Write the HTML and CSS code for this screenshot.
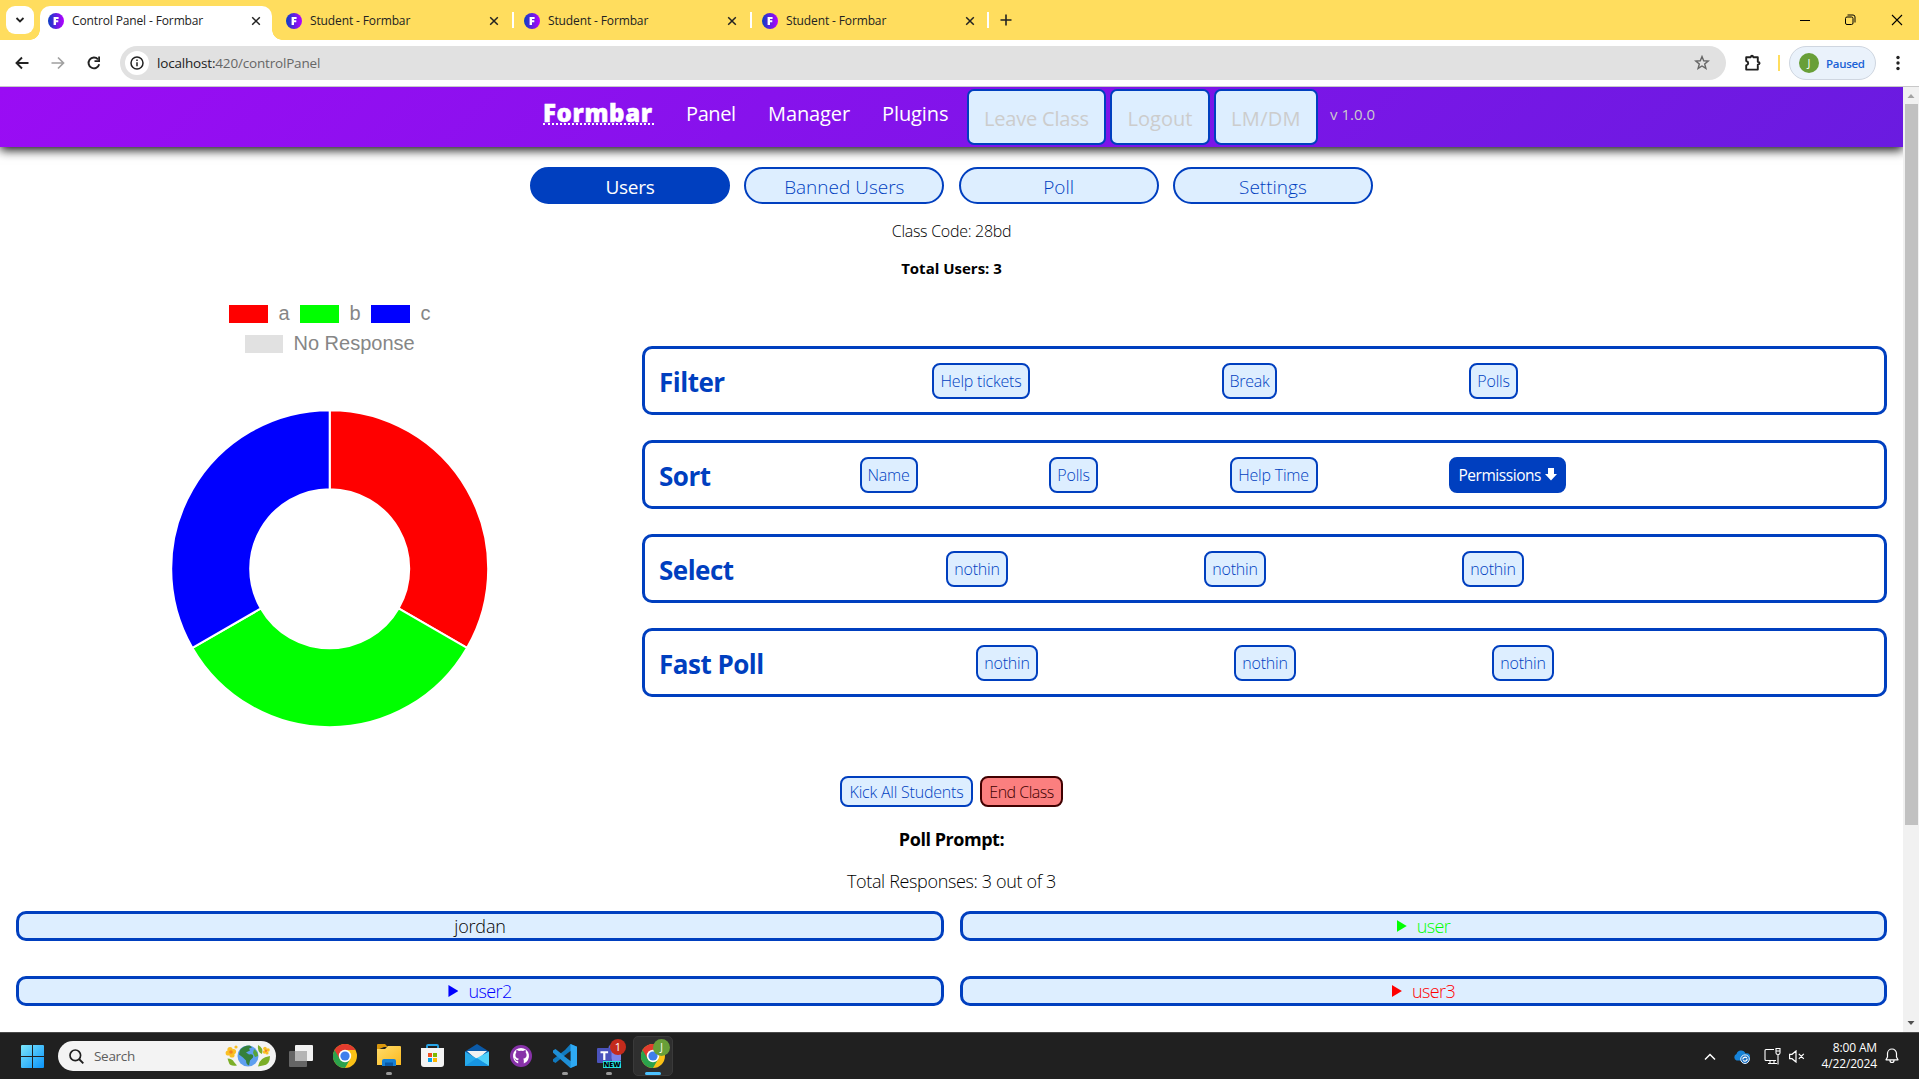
FILE: index.html
```html
<!DOCTYPE html>
<html lang="en">
<head>
<meta charset="utf-8">
<title>Control Panel - Formbar</title>
<link rel="stylesheet" href="styles.css">
</head>
<body>
<svg width="0" height="0" class="defs">
  <defs>
    <linearGradient id="fav" x1="0" x2="1"><stop offset="0" stop-color="#0b3fc4"/><stop offset="1" stop-color="#b400ff"/></linearGradient>
    <linearGradient id="win" x1="0" y1="0" x2="1" y2="1"><stop offset="0" stop-color="#7be6fb"/><stop offset="1" stop-color="#0a93fa"/></linearGradient>
    <linearGradient id="fold" x1="0" y1="0" x2="1" y2="1"><stop offset="0" stop-color="#ffdc6b"/><stop offset="1" stop-color="#fbb91f"/></linearGradient>
    <symbol id="favicon" viewBox="0 0 16 16"><circle cx="8" cy="8" r="8" fill="url(#fav)"/><path d="M5.600 4h5v2.100H8v1.200h2.300v2H8V12H5.600z" fill="#fff"/></symbol>
    <symbol id="close" viewBox="0 0 10 10"><path d="M1.200 1.200l7.600 7.600M8.800 1.200L1.200 8.800" stroke="#222" stroke-width="1.500" fill="none"/></symbol>
    <symbol id="chrome" viewBox="0 0 24 24">
      <circle cx="12" cy="12" r="12" fill="#fbc116"/>
      <path d="M12 12L1.600 6A12 12 0 0 0 12 24l5.200-9z" fill="#2ba24c"/>
      <path d="M1.600 6A12 12 0 0 1 22.400 6H12L6.800 15z" fill="#e33b2e"/>
      <circle cx="12" cy="12" r="6.200" fill="#fff"/><circle cx="12" cy="12" r="4.600" fill="#3f7fec"/>
    </symbol>
  </defs>
</svg>

<div class="tabstrip">
  <div class="tab-search"><svg width="10" height="8" viewBox="0 0 10 8"><path d="M1.500 2L5 5.500 8.500 2" fill="none" stroke="#222" stroke-width="1.800"/></svg></div>
  <div class="tab tab-active"><svg class="favicon"><use href="#favicon"/></svg><span class="tab-title">Control Panel - Formbar</span><svg class="close"><use href="#close"/></svg></div>
  <div class="tab"><svg class="favicon"><use href="#favicon"/></svg><span class="tab-title">Student - Formbar</span><svg class="close"><use href="#close"/></svg></div>
  <div class="tab tab-sep"><svg class="favicon"><use href="#favicon"/></svg><span class="tab-title">Student - Formbar</span><svg class="close"><use href="#close"/></svg></div>
  <div class="tab tab-sep"><svg class="favicon"><use href="#favicon"/></svg><span class="tab-title">Student - Formbar</span><svg class="close"><use href="#close"/></svg></div>
  <div class="new-tab"><svg width="12" height="12" viewBox="0 0 12 12"><path d="M6 .5v11M.5 6h11" stroke="#222" stroke-width="1.600"/></svg></div>
  <div class="window-controls">
    <svg width="10" height="12" viewBox="0 0 10 12"><path d="M0 6.500h10" stroke="#000"/></svg>
    <svg width="11" height="12" viewBox="0 0 11 12"><rect x=".5" y="3" width="7.500" height="7.500" rx="1.500" fill="none" stroke="#000"/><path d="M2.500 1h5.500a2 2 0 0 1 2 2v5.500" fill="none" stroke="#000"/></svg>
    <svg width="12" height="12" viewBox="0 0 12 12"><path d="M1 1l10 10M11 1L1 11" stroke="#000" stroke-width="1.100"/></svg>
  </div>
</div>

<div class="toolbar">
  <svg class="nav-icon" viewBox="0 0 16 16"><path d="M14.500 8H3M8 2.500L2.500 8 8 13.500" fill="none" stroke="#222" stroke-width="1.900"/></svg>
  <svg class="nav-icon" viewBox="0 0 16 16"><path d="M1.500 8H13M8 2.500L13.500 8 8 13.500" fill="none" stroke="#a0a0a0" stroke-width="1.700"/></svg>
  <svg class="nav-icon" viewBox="0 0 16 16"><path d="M13.200 9.300A5.400 5.400 0 1 1 12 4.300" fill="none" stroke="#222" stroke-width="1.900"/><path d="M14 1.500V7H8.500V5.300h3.700V1.500z" fill="#222"/></svg>
  <div class="omnibox">
    <div class="site-info"><svg width="14" height="14" viewBox="0 0 14 14"><circle cx="7" cy="7" r="6" fill="none" stroke="#222" stroke-width="1.500"/><path d="M7 6.200v4M7 3.500v1.500" stroke="#222" stroke-width="1.500"/></svg></div>
    <span class="url"><b>localhost:</b>420/controlPanel</span>
    <svg class="star" width="16" height="16" viewBox="0 0 16 16"><path d="M8 1.600l1.700 4.200 4.500.3-3.500 2.900 1.200 4.400L8 11l-3.900 2.400 1.200-4.400L1.800 6.100l4.500-.3z" fill="none" stroke="#666" stroke-width="1.400"/></svg>
  </div>
  <svg class="ext" width="18" height="18" viewBox="0 0 18 18"><path d="M2.200 3.200h4.600q.2-1.500 1.200-1.500t1.200 1.500h4.600v4.600q1.800.2 1.800 1.400t-1.800 1.400v5H2.200v-4.200q2-.5 2-2.200t-2-2.200z" fill="none" stroke="#1f1f1f" stroke-width="1.900" stroke-linejoin="round"/></svg>
  <div class="tool-sep"></div>
  <div class="profile"><span class="avatar">J</span><span class="paused">Paused</span></div>
  <svg class="kebab" width="4" height="16" viewBox="0 0 4 16"><circle cx="2" cy="2.500" r="1.700"/><circle cx="2" cy="8" r="1.700"/><circle cx="2" cy="13.500" r="1.700"/></svg>
</div>

<div class="viewport">
  <div class="page">
    <header class="site-header">
      <a class="brand">Formbar</a>
      <a class="link link-panel">Panel</a>
      <a class="link link-manager">Manager</a>
      <a class="link link-plugins">Plugins</a>
      <button class="head-btn btn-leave">Leave Class</button>
      <button class="head-btn btn-logout">Logout</button>
      <button class="head-btn btn-mode">LM/DM</button>
      <span class="version">v 1.0.0</span>
    </header>

    <nav class="pills">
      <a class="pill pill-on">Users</a>
      <a class="pill">Banned Users</a>
      <a class="pill">Poll</a>
      <a class="pill">Settings</a>
    </nav>
    <div class="class-code">Class Code: 28bd</div>
    <div class="total-users">Total Users: 3</div>

    <section class="dashboard">
      <svg class="chart" width="630" height="450" viewBox="0 0 630 450">
        <g class="legend">
          <rect x="229" y="15" width="39" height="18" fill="#f00"/><text x="278.500" y="30">a</text>
          <rect x="300" y="15" width="39" height="18" fill="#0f0"/><text x="349.500" y="30">b</text>
          <rect x="371" y="15" width="39" height="18" fill="#00f"/><text x="420.500" y="30">c</text>
          <rect x="245" y="45" width="38" height="18" fill="#e1e1e1"/><text x="293.500" y="60">No Response</text>
        </g>
        <g transform="translate(329.700 278.700)" stroke="#fff" stroke-width="2">
          <path d="M0-158.500A158.500 158.500 0 0 1 137.270 79.250L68.850 39.750A79.500 79.500 0 0 0 0-79.500z" fill="#f00"/>
          <path d="M137.270 79.250A158.500 158.500 0 0 1-137.270 79.250L-68.850 39.750A79.500 79.500 0 0 0 68.850 39.750z" fill="#0f0"/>
          <path d="M-137.270 79.250A158.500 158.500 0 0 1 0-158.500V-79.500A79.500 79.500 0 0 0-68.850 39.750z" fill="#00f"/>
        </g>
      </svg>
      <div class="panels">
        <div class="panel panel-filter"><h2>Filter</h2><button class="w98">Help tickets</button><button class="w55">Break</button><button class="w49">Polls</button></div>
        <div class="panel panel-sort"><h2>Sort</h2><button class="w58">Name</button><button class="w49">Polls</button><button class="w88">Help Time</button><button class="w117 on">Permissions <svg width="12" height="13" viewBox="0 0 12 13"><path d="M3 0h6v6h3l-6 6.500L0 6h3z" fill="#fff"/></svg></button></div>
        <div class="panel panel-select"><h2>Select</h2><button class="w62">nothin</button><button class="w62">nothin</button><button class="w62">nothin</button></div>
        <div class="panel panel-fast"><h2>Fast Poll</h2><button class="w62">nothin</button><button class="w62">nothin</button><button class="w62">nothin</button></div>
      </div>
    </section>

    <div class="actions"><button class="kick">Kick All Students</button><button class="end">End Class</button></div>
    <div class="poll-prompt">Poll Prompt:</div>
    <div class="responses">Total Responses: 3 out of 3</div>

    <div class="users">
      <div class="user"><span>jordan</span></div>
      <div class="user green"><i></i><span>user</span></div>
      <div class="user blue"><i></i><span>user2</span></div>
      <div class="user red"><i></i><span>user3</span></div>
    </div>
  </div>
  <div class="scrollbar">
    <svg width="16" height="17" viewBox="0 0 16 17"><path d="M4.500 11h7L8 7z" fill="#a3a3a3"/></svg>
    <div class="thumb"></div>
    <svg class="down" width="16" height="17" viewBox="0 0 16 17"><path d="M4.500 6h7L8 10z" fill="#505050"/></svg>
  </div>
</div>

<div class="taskbar">
  <svg class="start" width="23" height="23" viewBox="0 0 23 23"><path d="M0 1a1 1 0 0 1 1-1h10v11H0zM12 0h10a1 1 0 0 1 1 1v10H12zM0 12h11v11H1a1 1 0 0 1-1-1zM12 12h11v10a1 1 0 0 1-1 1H12z" fill="url(#win)"/></svg>
  <div class="search">
    <svg width="15" height="15" viewBox="0 0 15 15"><circle cx="6.300" cy="6.300" r="5.300" fill="none" stroke="#1f1f1f" stroke-width="1.700"/><path d="M10 10l4.300 4.300" stroke="#1f1f1f" stroke-width="1.900"/></svg>
    <span>Search</span>
    <svg class="earth" width="46" height="24" viewBox="0 0 46 24">
      <g fill="#f9bf24"><circle cx="5" cy="5.500" r="2.600"/><circle cx="8.500" cy="7.500" r="2.600"/><circle cx="3.200" cy="9" r="2.600"/><circle cx="7" cy="11" r="2.600"/><circle cx="11" cy="3" r="1.600"/><circle cx="40" cy="4.500" r="1.800"/><circle cx="43" cy="6" r="1.800"/><circle cx="39.500" cy="8" r="1.800"/><circle cx="42" cy="9" r="1.600"/></g>
      <circle cx="6" cy="8" r="1.800" fill="#f4811f"/><circle cx="41" cy="6.800" r="1.200" fill="#f4811f"/>
      <g fill="#7bae27"><path d="M2.500 14.500q5 0 6.500 3.500l3 3.500q-7 1-8-2.500z"/><path d="M33 1q6 3 4 9-5-2-4-9zM45 12q0 9-7 9.500l-5 1q1-9 12-10.500z"/></g>
      <circle cx="23" cy="12" r="10.500" fill="#5e9ff0"/>
      <path d="M15 6q4-5 10-4.500l2 2-3 1 1 2-4 2 3 2q5-1 4 3l-3 3-1 5q-3-1-3-5l-3-3-4-3z" fill="#35803a"/><path d="M29 5q4 3 4 7l-3 1-2-4z" fill="#57a43a"/>
    </svg>
  </div>
  <svg class="task-view" width="24" height="23" viewBox="0 0 24 23"><rect x="6" width="18" height="16" rx="1" fill="#f1f1f1"/><rect y="6" width="18" height="16" rx="1" fill="#777" fill-opacity=".8"/><rect x="6" y="6" width="12" height="10" fill="#b4b4b4"/></svg>
  <svg class="app app-chrome" width="24" height="24"><use href="#chrome"/></svg>
  <div class="app app-explorer running"><svg width="24" height="22" viewBox="0 0 24 22"><path d="M0 1q0-1 1-1h7l3 3h-4L0 6z" fill="#d9960c"/><path d="M0 5h8l3-3h12q1 0 1 1v18H0z" fill="url(#fold)"/><path d="M5 22v-5q0-2 2-2h10q2 0 2 2v5z" fill="#1680d4"/><path d="M8 18.500h8V22H8z" fill="#0a58a5"/></svg></div>
  <svg class="app app-store" width="23" height="23" viewBox="0 0 23 23"><path d="M6 5V1.800Q6 1 7 1h9q1 0 1 .8V5" fill="none" stroke="#27a5e8" stroke-width="1.800"/><path d="M0 4h23v16q0 3-3 3H3q-3 0-3-3z" fill="#f4f4f4"/><path d="M7 9h4v4H7z" fill="#f14f21"/><path d="M12 9h4v4h-4z" fill="#7eb900"/><path d="M7 14h4v4H7z" fill="#00a3ee"/><path d="M12 14h4v4h-4z" fill="#feb800"/></svg>
  <svg class="app app-mail" width="24" height="22" viewBox="0 0 24 22"><path d="M0 7.500L12 0l12 7.500-4 5H4z" fill="#0b5aa8"/><path d="M2 7h20l-10 9z" fill="#f1f1f1"/><path d="M0 7.500L24 22H0z" fill="#27a9ea"/><path d="M24 7.500V22L11 14.500z" fill="#4fd0fa"/><path d="M0 22l12-8 12 8z" fill="#1795e2"/></svg>
  <svg class="app app-github" width="22" height="22" viewBox="0 0 22 22"><circle cx="11" cy="11" r="11" fill="#8732a8"/><path d="M11 3a8 8 0 0 0-2.800 15.500v-2.300q-2.400.4-3-1.600l-1-1.200q1-.2 1.800 1.200.8 1 2.200.4l.6-1.200Q5.400 13.200 5.400 10q0-1.500.9-2.500-.4-1 .1-2.400 1 0 2.500 1a8 8 0 0 1 4.200 0q1.500-1 2.500-1 .5 1.400.1 2.400.9 1 .9 2.500 0 3.200-3.400 3.800.6.600.6 1.800v2.900A8 8 0 0 0 11 3z" fill="#fff"/></svg>
  <div class="app app-code running"><svg width="24" height="24" viewBox="0 0 24 24"><path d="M17.500 0L24 2.800v18.400L17.500 24 8 14.500 2.500 19 0 17.500v-2.200L12 6z" fill="#1179bd"/><path d="M17.500 24L0 8.700V6.500L2.500 5 17.500 17z" fill="#1f8fd6"/><path d="M17.500 0L24 2.800v18.400L17.500 24z" fill="#2ea9f3"/><path d="M17.500 7v10L11 12z" fill="#202020"/></svg></div>
  <div class="app app-teams running"><svg width="24" height="24" viewBox="0 0 24 24"><path d="M12 4h12v12q-3 5-9 3z" fill="#7b83eb"/><circle cx="15" cy="4" r="3.500" fill="#5b63cb"/><rect y="4" width="14.500" height="15" rx="1" fill="#4b53bc"/><path d="M3.500 7.300h7.600v2H8.400V16H6.200V9.300H3.500z" fill="#fff"/></svg><span class="count">1</span><span class="new">NEW</span></div>
  <div class="app app-active running"><svg width="24" height="24"><use href="#chrome"/></svg><span class="who">J</span></div>
  <div class="tray">
    <svg class="t-chev" width="12" height="8" viewBox="0 0 12 8"><path d="M1 6.500L6 1.500l5 5" fill="none" stroke="#fff" stroke-width="1.500"/></svg>
    <svg class="t-cloud" width="17" height="14" viewBox="0 0 17 14"><path d="M3.500 10.500a3.500 3.500 0 0 1 0-6.500 4.800 4.800 0 0 1 9-.5A3.500 3.500 0 0 1 15 10.500z" fill="#1683d9"/><circle cx="12" cy="9.200" r="4.300" fill="#1a6fc0" stroke="#e9f4ff" stroke-width="1"/><path d="M9.800 9.600a2.300 2.300 0 0 1 4-1.600M14.200 8.800a2.300 2.300 0 0 1-4 1.600" fill="none" stroke="#fff" stroke-width="1.200"/></svg>
    <svg class="t-net" width="17" height="17" viewBox="0 0 17 17"><path d="M10 1.500H2q-1 0-1 1v9q0 1 1 1h10M4 15.500h9M6 12.500v3M10 12.500v3M14 6.500v10M12 .5v4.500q0 1.500 2 1.500t2-1.500V.5zM12 3h4" fill="none" stroke="#fff" stroke-width="1.100"/></svg>
    <svg class="t-mute" width="16" height="13" viewBox="0 0 16 13"><path d="M.6 4.300h2.400L7 1v11L3 8.700H.6zM9.800 3.800l5 5M14.800 3.800l-5 5" fill="none" stroke="#fff" stroke-width="1.200"/></svg>
    <div class="clock"><span>8:00 AM</span><span>4/22/2024</span></div>
    <svg class="t-bell" width="14" height="16" viewBox="0 0 14 16"><path d="M1 11.800h12L11.500 9V5.500a4.500 4.500 0 0 0-9 0V9zM5 12.500q0 2 2 2t2-2" fill="none" stroke="#fff" stroke-width="1.200" stroke-linejoin="round"/></svg>
  </div>
</div>
</body>
</html>
```
FILE: styles.css
```css
* { box-sizing: border-box; }
body {
  margin: 0;
  width: 1919px;
  height: 1079px;
  overflow: hidden;
  display: flex;
  flex-direction: column;
  background: #fff;
  font-family: "Open Sans", "Noto Sans", sans-serif;
  color: #000;
}
svg { display: block; flex: none; }
.defs { position: absolute; }
button { font-family: inherit; padding: 0; margin: 0; white-space: nowrap; }

/* browser tabs */
.tabstrip { height: 40px; background: #ffdd5e; display: flex; padding-left: 6px; flex: none; }
.tab-search { width: 28px; height: 28px; margin-top: 6px; border-radius: 9px; background: #fff; display: flex; align-items: center; justify-content: center; }
.tab { width: 238px; height: 34px; margin-top: 6px; padding: 0 11px 5px 14px; display: flex; align-items: center; position: relative; }
.tab-active { width: 232px; margin-left: 6px; padding-left: 8px; background: #fff; border-radius: 10px 10px 0 0; }
.tab-active::before, .tab-active::after { content: ""; position: absolute; bottom: 0; width: 10px; height: 10px; }
.tab-active::before { left: -10px; background: radial-gradient(circle at 0 0, transparent 9.5px, #fff 10px); }
.tab-active::after { right: -10px; background: radial-gradient(circle at 100% 0, transparent 9.5px, #fff 10px); }
.tab-sep::before { content: ""; position: absolute; left: 2px; top: 6px; width: 2px; height: 16px; background: #fff; }
.favicon { width: 16px; height: 16px; margin-right: 8px; }
.tab-title { font-size: 12px; letter-spacing: -.13px; color: #222; flex: 1; white-space: nowrap; }
.close { width: 10px; height: 10px; }
.new-tab { width: 34px; padding: 14px 0 0 12px; border-left: 2px solid transparent; position: relative; }
.new-tab::before { content: ""; position: absolute; left: -1px; top: 12px; width: 2px; height: 16px; background: #fff; }
.window-controls { display: flex; gap: 35px; margin-left: auto; padding: 14px 16px 0 0; }

/* toolbar */
.toolbar { height: 47px; border-bottom: 1px solid #c8c8c8; background: #fff; display: flex; align-items: center; padding: 0 19px 0 14px; flex: none; }
.nav-icon { width: 16px; height: 16px; margin-right: 20px; }
.nav-icon + .nav-icon + .nav-icon { margin-right: 18px; }
.omnibox { width: 1606px; height: 34px; border-radius: 17px; background: #e1e1e1; display: flex; align-items: center; padding: 0 16px 0 5px; }
.site-info { width: 24px; height: 24px; border-radius: 12px; background: #fff; display: flex; align-items: center; justify-content: center; margin-right: 8px; }
.url { font-size: 13.5px; letter-spacing: -.18px; color: #666; flex: 1; }
.url b { font-weight: 400; color: #222; }
.ext { margin-left: 18px; }
.tool-sep { width: 2px; height: 16px; background: #ffdd5e; margin: 0 9px 0 16px; }
.profile { width: 87px; height: 34px; border: 1px solid #cfd6e0; border-radius: 17px; background: #eaf2fb; display: flex; align-items: center; padding-left: 9px; gap: 7px; }
.avatar { width: 20px; height: 20px; border-radius: 10px; background: #689f38; color: #fff; font-size: 11px; line-height: 20px; text-align: center; }
.paused { font-size: 11.5px; letter-spacing: -.3px; font-weight: 600; color: #1a62d6; }
.kebab { margin-left: auto; fill: #222; }

/* page */
.viewport { height: 945px; display: flex; flex: none; }
.page { width: 1903px; overflow: hidden; }
.site-header {
  height: 60px; padding-left: 543px; display: flex; align-items: flex-start; color: #fff;
  background: linear-gradient(135deg, #9a0cf4, #6a1be0);
  box-shadow: 0 3px 10px rgba(0, 0, 0, .95);
}
.brand { width: 111px; height: 38px; line-height: 51px; font-size: 24px; letter-spacing: .65px; font-weight: 800; -webkit-text-stroke: .5px #fff; border-bottom: 2px dotted #fff; white-space: nowrap; }
.link { line-height: 54px; font-size: 20px; font-weight: 500; letter-spacing: -.1px; white-space: nowrap; }
.link-panel { width: 50px; margin-left: 32px; letter-spacing: -.4px; }
.link-manager { width: 83px; margin-left: 32px; }
.link-plugins { width: 67px; margin-left: 31px; }
.head-btn { height: 56px; margin-top: 2px; padding-top: 3px; border: 2px solid #003fbf; border-radius: 7px; background: #def; color: #ccc; font-size: 20px; }
.btn-leave { width: 139px; margin-left: 18px; letter-spacing: -.2px; }
.btn-logout { width: 100px; margin-left: 4px; }
.btn-mode { width: 104px; margin-left: 4px; letter-spacing: .3px; }
.version { margin-left: 12px; line-height: 55px; font-size: 15px; color: #ccc; }

.pills { display: flex; gap: 14.3px; margin: 20px 0 0 530px; }
.pill { width: 200px; height: 37px; border: 2px solid #003fbf; border-radius: 19px; background: #def; color: #003fbf; font-size: 19px; line-height: 36px; text-align: center; font-weight: 350; }
.pill-on { background: #003fbf; color: #fff; font-weight: 400; letter-spacing: -.3px; }
.class-code, .total-users { height: 24px; line-height: 24px; font-size: 16px; text-align: center; font-weight: 350; }
.class-code { margin-top: 15px; letter-spacing: -.28px; }
.total-users { margin-top: 13px; font-size: 15px; font-weight: 700; }

.dashboard { display: flex; height: 450px; margin-top: 10px; }
.legend text { font: 20px "Liberation Sans", Arial, sans-serif; fill: #868686; }
.panels { width: 1245px; margin: 56px 0 0 12px; display: flex; flex-direction: column; gap: 25px; }
.panel { height: 69px; border: 3px solid #003fbf; border-radius: 10px; display: flex; align-items: center; padding-left: 14px; }
.panel h2 { margin: 0; font-size: 26px; letter-spacing: -.5px; font-weight: 700; color: #003fbf; line-height: 36px; padding-top: 2px; }
.panel button, .actions button { height: 36px; border: 2px solid #003fbf; border-radius: 8px; background: #def; color: #003fbf; font-size: 16px; letter-spacing: -.22px; font-weight: 350; flex: none; }
.panel button.on { background: #003fbf; color: #fff; font-size: 15.5px; font-weight: 400; letter-spacing: -.45px; }
.panel button svg { display: inline-block; }
.w49 { width: 49px; } .w55 { width: 55px; } .w58 { width: 58px; } .w62 { width: 62px; }
.w88 { width: 88px; } .w98 { width: 98px; } .w117 { width: 117px; }
.panel-filter { gap: 192px; } .panel-filter h2 { width: 81px; }
.panel-sort { gap: 131.5px; } .panel-sort h2 { width: 69px; }
.panel-select { gap: 196px; } .panel-select h2 { width: 91px; }
.panel-fast { gap: 196px; } .panel-fast h2 { width: 121px; white-space: nowrap; }

.actions { display: flex; justify-content: center; gap: 7px; margin-top: 36px; }
.actions button { height: 31px; width: 133px; }
.actions .end { width: 83px; background: #fb7f7f; border-color: #400000; color: #400000; letter-spacing: -.5px; }
.poll-prompt, .responses { height: 30px; line-height: 30px; font-size: 18px; text-align: center; font-weight: 300; }
.poll-prompt { margin-top: 17px; font-weight: 700; letter-spacing: -.45px; }
.responses { margin-top: 12px; font-weight: 350; letter-spacing: -.35px; }

.users { display: grid; grid-template-columns: 928px 927px; gap: 35px 16px; margin: 15px 0 0 16px; }
.user { height: 30px; border: 3px solid #003fbf; border-radius: 10px; background: #def; display: flex; align-items: center; justify-content: center; font-size: 18px; font-weight: 350; line-height: 24px; letter-spacing: -.2px; }
.user i { width: 10px; height: 12px; margin-right: 10px; background: currentColor; clip-path: polygon(0 0, 100% 50%, 0 100%); }
.green, .blue, .red { letter-spacing: -.6px; }
.green { color: #0f0; } .blue { color: #00f; } .red { color: #f00; }

.scrollbar { width: 16px; background: #f1f1f1; display: flex; flex-direction: column; }
.thumb { width: 13px; height: 721px; margin-left: 2px; background: #c1c1c1; }
.down { margin-top: auto; }

/* taskbar */
.taskbar { height: 47px; background: #202020; border-top: 1px solid #4a4a4a; display: flex; align-items: flex-start; flex: none; }
.start { margin: 12px 14px 0 21px; }
.search { width: 218px; height: 30px; margin-top: 8px; border-radius: 15px; background: #f3f3f3; display: flex; align-items: center; padding: 0 5px 0 11px; }
.search span { flex: 1; margin-left: 10px; font-size: 13.5px; letter-spacing: -.3px; color: #5d5d5d; }
.task-view { margin: 12px 0 0 13px; }
.app { margin-top: 11px; position: relative; }
.app-chrome { margin-left: 20px; }
.app-explorer { margin-left: 20px; width: 24px; }
.app-store { margin: 11px 0 0 20px; }
.app-mail { margin-left: 21px; }
.app-github { margin: 12px 0 0 21px; }
.app-code { margin-left: 21px; width: 24px; }
.app-teams { margin-left: 20px; width: 24px; }
.app-active { width: 40px; height: 40px; margin: 3px 0 0 12px; border: 1px solid #3a3a3a; border-radius: 5px; background: #2f2f2f; padding: 7px; }
.running::after { content: ""; position: absolute; left: 9px; top: 28px; width: 6px; height: 3px; border-radius: 2px; background: #999; }
.app-active::after { left: 11px; top: 35px; width: 16px; background: #4cc2ff; }
.count { position: absolute; left: 13px; top: -5px; width: 16px; height: 16px; border-radius: 8px; background: #c42b1c; color: #fff; font-size: 11px; line-height: 16px; text-align: center; }
.new { position: absolute; left: 6px; top: 17px; width: 18px; height: 7px; background: #25e0e0; color: #000; font-size: 7px; font-weight: 800; line-height: 7px; text-align: center; }
.who { position: absolute; left: 19px; top: 2px; width: 17px; height: 17px; border-radius: 9px; background: #689f38; color: #fff; font-size: 10px; line-height: 17px; text-align: center; }
.tray { display: flex; margin-left: auto; padding-right: 20px; color: #fff; }
.t-chev { margin: 20px 17px 0 0; }
.t-cloud { margin: 17px 14px 0 0; }
.t-net { margin: 15px 8px 0 0; }
.t-mute { margin: 17px 0 0 0; }
.clock { width: 72px; margin-top: 7px; display: flex; flex-direction: column; align-items: flex-end; font-size: 12px; letter-spacing: -.15px; line-height: 16px; }
.t-bell { margin: 15px 0 0 8px; }
```
